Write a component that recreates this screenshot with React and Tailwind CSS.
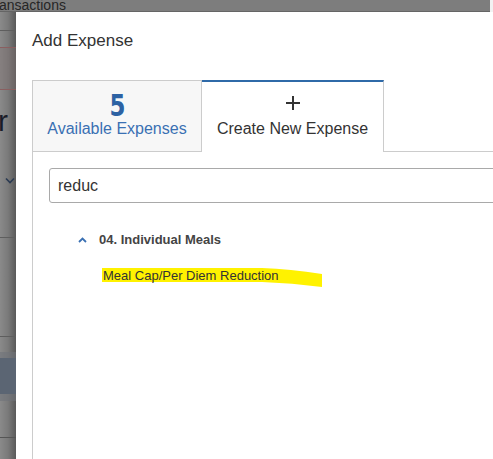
import React from "react";

export default function App() {
  return (
    <div
      className="relative w-[493px] h-[459px] overflow-hidden bg-[#7c7c7c] flex flex-col"
      style={{ fontFamily: '"Liberation Sans", Arial, sans-serif' }}
    >
      {/* top strip of background page */}
      <div className="h-[12px] shrink-0 flex">
        <div className="flex-1 relative overflow-hidden bg-[#7d7d7d] border-b border-[#656565]">
          <span className="absolute left-[-1px] top-[-3px] text-[14px] leading-[16px] text-[#262626]">
            ansactions
          </span>
        </div>
        <div className="w-[3px] bg-[#f2f2f2]" />
      </div>

      <div className="flex flex-1 min-h-0">
        {/* left strip: dimmed background page */}
        <div className="w-[16px] shrink-0 relative overflow-hidden flex flex-col bg-gradient-to-r from-[#8a8a8a] via-[#7a7a7a] to-[#5a5a5a]">
          <div className="h-[19px] border-b border-[#5e5e5e]" />
          <div className="h-[17px] border-b border-[#8a5f60]" />
          <div className="h-[42px] bg-[#7f7171]/40 border-b border-[#8a5f60]" />
          <div className="h-[54px] relative">
            <span className="absolute left-[-2px] top-[16px] text-[30px] leading-[30px] text-[#1a1c28]">r</span>
          </div>
          <div className="h-[72px] flex items-center justify-center pl-[4px]">
            <svg width="10" height="7" viewBox="0 0 10 7">
              <path d="M1 1.5 L5 5.5 L9 1.5" stroke="#2a3a52" strokeWidth="1.6" fill="none" />
            </svg>
          </div>
          <div className="h-[22px] border-b border-[#5e5e5e]" />
          <div className="h-[99px] border-b border-[#5e5e5e]" />
          <div className="h-[15px]" />
          <div className="h-[6px] bg-[#6f737a]/60" />
          <div className="h-[36px] bg-[#5b6573]" />
          <div className="h-[7px] bg-[#6f737a]/60" />
          <div className="h-[37px] border-b border-[#555]" />
          <div className="flex-1" />
        </div>

        {/* modal */}
        <div className="flex-1 bg-white flex flex-col pl-[16px] min-w-0">
          <div className="mt-[19px] text-[17px] leading-[20px] text-[#333]">Add Expense</div>

          <div className="mt-[29px] flex flex-col flex-1 min-h-0">
            {/* tabs */}
            <div className="flex h-[72px] shrink-0">
              <div className="w-[170px] bg-[#f7f7f7] border border-[#cccccc] flex flex-col items-center pt-[10px]">
                <span
                  className="text-[30px] leading-[30px] font-bold text-[#2d62a3] scale-x-[0.85]"
                  style={{ fontFamily: '"Liberation Sans Narrow", "DejaVu Sans Condensed", sans-serif' }}
                >
                  5
                </span>
                <span className="mt-[-2px] text-[16px] leading-[20px] text-[#3a70b3]">Available Expenses</span>
              </div>
              <div className="w-[182px] bg-white border-t-2 border-t-[#2f6aa8] border-r border-r-[#cccccc] flex flex-col items-center pt-[13px]">
                <svg width="16" height="16" viewBox="0 0 16 16">
                  <path d="M8 1 V15 M1 8 H15" stroke="#333" strokeWidth="2" fill="none" />
                </svg>
                <span className="mt-[8px] text-[16px] leading-[20px] text-[#333]">Create New Expense</span>
              </div>
              <div className="flex-1 border-b border-[#cccccc]" />
            </div>

            {/* panel */}
            <div className="flex-1 border-l border-[#cccccc] pl-[16px] pt-[16px] flex flex-col">
              <div className="h-[35px] w-[460px] border border-[#a9a9a9] rounded-[3px] flex items-center pl-[8px] text-[16px] text-[#333]">
                reduc
              </div>

              <div className="mt-[29px] flex items-center pl-[29px] h-[16px]">
                <svg width="9" height="6" viewBox="0 0 9 6" className="mr-[12px]">
                  <path d="M1 5 L4.5 1.5 L8 5" stroke="#3a70b3" strokeWidth="1.8" fill="none" />
                </svg>
                <span className="text-[13px] leading-[16px] font-bold text-[#444]">04. Individual Meals</span>
              </div>

              <div className="relative mt-[20px] pl-[54px] h-[16px] text-[13px] leading-[16px]">
                <svg
                  className="absolute left-[53px] top-[0px]"
                  width="222"
                  height="22"
                  viewBox="0 0 222 22"
                >
                  <path
                    d="M0 0 L160 0 Q188 1 220 6 L220 19 Q190 15 160 14 L0 14 Z"
                    fill="#fff200"
                  />
                </svg>
                <span className="relative text-[13px] leading-[16px] text-[#333]">
                  Meal Cap/Per Diem Reduction
                </span>
              </div>
            </div>
          </div>
        </div>
      </div>
    </div>
  );
}
